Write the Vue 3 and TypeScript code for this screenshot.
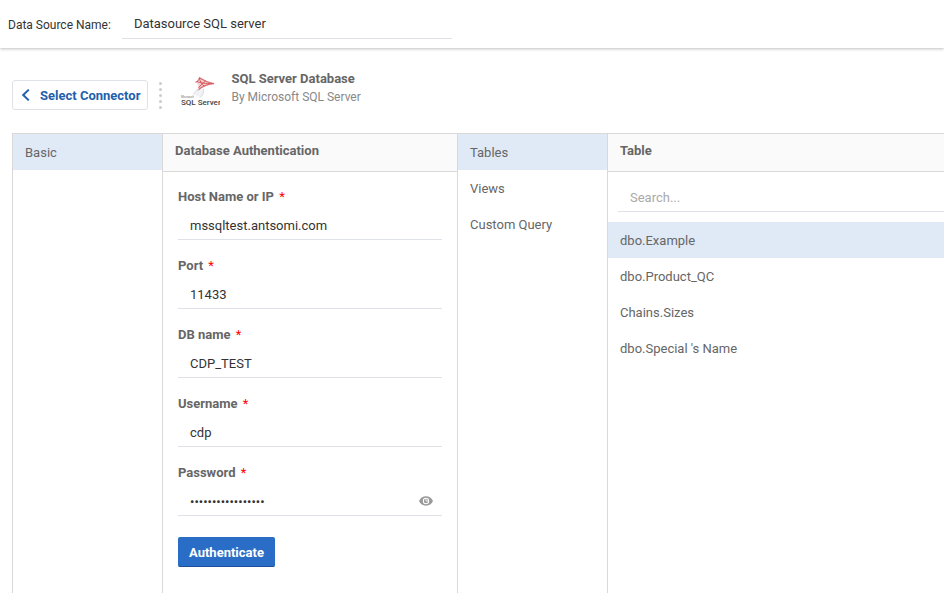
<script setup lang="ts">
import { ref } from 'vue'

interface Field {
  id: string
  label: string
  type: 'text' | 'password'
}

const fields: Field[] = [
  { id: 'host', label: 'Host Name or IP', type: 'text' },
  { id: 'port', label: 'Port', type: 'text' },
  { id: 'database', label: 'DB name', type: 'text' },
  { id: 'username', label: 'Username', type: 'text' },
  { id: 'password', label: 'Password', type: 'password' },
]

const values = ref<Record<string, string>>({
  host: 'mssqltest.antsomi.com',
  port: '11433',
  database: 'CDP_TEST',
  username: 'cdp',
  password: 'x'.repeat(17),
})

const sourceName = ref('Datasource SQL server')
const search = ref('')
const showPassword = ref(false)

const steps = ['Basic']
const step = ref('Basic')
const kinds = ['Tables', 'Views', 'Custom Query']
const kind = ref('Tables')
const tables = ['dbo.Example', 'dbo.Product_QC', 'Chains.Sizes', "dbo.Special 's Name"]
const table = ref('dbo.Example')

function inputType(field: Field): string {
  return field.type === 'password' && showPassword.value ? 'text' : field.type
}
</script>

<template>
  <div class="page">
    <header class="topbar">
      <label class="topbar-label" for="source-name">Data Source Name:</label>
      <input id="source-name" v-model="sourceName" class="line-input source-input" type="text" />
    </header>

    <div class="toolbar">
      <button class="back" type="button">
        <svg class="back-icon" viewBox="0 0 10 14" aria-hidden="true">
          <path d="M7.8 1.6 2.2 7l5.6 5.4" fill="none" stroke="currentColor" stroke-width="2" />
        </svg>
        <span>Select Connector</span>
      </button>
      <div class="dots" aria-hidden="true"><i v-for="n in 5" :key="n"></i></div>
      <div class="connector">
        <svg class="logo" viewBox="0 0 40 34" aria-hidden="true">
          <path d="M15 7c2.500-1.300 4-3 4-5 3 2.500 9 5 15 6.500-6 .5-11 2.500-16.500 7C19 12 19 9 15 7z" fill="#f3cfd0" />
          <path d="M19 2.500C24 5.500 28 7.500 34 8.700 28 9 22 11.500 17.500 15.500" fill="none" stroke="#d8686c" stroke-width="1.300" />
          <path d="M15.500 7c2 0 3.500-2 3.800-4 .5 3.500 3 6 4.500 8M17 6.500c3 1.500 9 2 15 2.200M18.500 13c2-3 4-4.500 7-7" fill="none" stroke="#d4595d" stroke-width="1" />
          <path d="M19.500 15c-4 1-6 3-5.300 4.500.8 1.200 4 1.300 5.800 3 3-1 4-5 3.500-9z" fill="#f0f2f5" />
          <path d="M19 14.500c-4 1.300-5.500 3.500-5 5M23.500 14c.5 3-.5 6-3.500 8.500" fill="none" stroke="#d5dae0" stroke-width="1" />
          <text class="logo-small" x="1" y="23">Microsoft</text>
          <text class="logo-text" x="1" y="30">SQL Server</text>
        </svg>
        <div class="connector-text">
          <h1>SQL Server Database</h1>
          <p>By Microsoft SQL Server</p>
        </div>
      </div>
    </div>

    <main class="panels">
      <nav class="panel">
        <button
          v-for="item in steps"
          :key="item"
          class="item"
          :class="{ active: item === step }"
          type="button"
          @click="step = item"
        >{{ item }}</button>
      </nav>

      <section class="panel">
        <h2 class="panel-title">Database Authentication</h2>
        <form class="form" @submit.prevent>
          <div v-for="field in fields" :key="field.id" class="field">
            <label :for="field.id">{{ field.label }} <span class="required">*</span></label>
            <div class="control">
              <input
                :id="field.id"
                v-model="values[field.id]"
                class="line-input"
                :type="inputType(field)"
              />
              <button
                v-if="field.type === 'password'"
                class="eye"
                type="button"
                aria-label="Show password"
                @click="showPassword = !showPassword"
              >
                <svg viewBox="0 0 14 10" aria-hidden="true">
                  <path d="M7 .3C3.900.3 1.300 2.200 0 5c1.300 2.800 3.900 4.700 7 4.700s5.700-1.900 7-4.700C12.700 2.200 10.100.3 7 .3z" fill="#999" />
                  <circle cx="7" cy="5" r="3.200" fill="#fff" />
                  <circle cx="7" cy="5" r="2.200" fill="#999" />
                  <path d="M7 3.200V5h2" fill="none" stroke="#fff" stroke-width=".9" />
                </svg>
              </button>
            </div>
          </div>
          <div class="actions">
            <button class="primary" type="submit">Authenticate</button>
          </div>
        </form>
      </section>

      <nav class="panel">
        <button
          v-for="item in kinds"
          :key="item"
          class="item"
          :class="{ active: item === kind }"
          type="button"
          @click="kind = item"
        >{{ item }}</button>
      </nav>

      <section class="panel last">
        <h2 class="panel-title">Table</h2>
        <div class="search">
          <input v-model="search" class="line-input" type="text" placeholder="Search..." aria-label="Search..." />
        </div>
        <button
          v-for="item in tables"
          :key="item"
          class="item"
          :class="{ active: item === table }"
          type="button"
          @click="table = item"
        >{{ item }}</button>
      </section>
    </main>
  </div>
</template>

<style>
body {
  background: #fff;
}
</style>

<style scoped>
* {
  box-sizing: border-box;
}

.page {
  display: flex;
  flex-direction: column;
  min-height: 100vh;
  color: #666;
  font: 13px/20px Roboto, 'Liberation Sans', sans-serif;
}

button,
input {
  font: inherit;
}

h1,
h2,
p {
  margin: 0;
  font-size: 13px;
}

.topbar {
  display: flex;
  align-items: center;
  gap: 11px;
  height: 48px;
  padding: 0 8px;
  box-shadow: 0 1px 3px rgba(0, 0, 0, 0.25);
}

.topbar-label {
  padding-top: 2px;
  color: #333;
  font-size: 12px;
}

.line-input {
  width: 100%;
  height: 29px;
  padding: 0 12px;
  border: 0;
  border-bottom: 1px solid #dee2e6;
  border-radius: 0;
  outline: 0;
  background: transparent;
  color: #333;
}

.line-input::placeholder {
  color: #aaa;
  opacity: 1;
}

.source-input {
  width: 330px;
}

.toolbar {
  display: flex;
  align-items: center;
  padding: 22px 12px 20px;
}

.back {
  display: flex;
  align-items: center;
  gap: 9px;
  height: 30px;
  margin-top: 7px;
  padding: 2px 7px 0 8px;
  border: 1px solid #dee2e6;
  border-radius: 3px;
  background: #fff;
  color: #1f5fac;
  font-weight: 700;
  white-space: nowrap;
}

.back-icon {
  width: 10px;
  height: 14px;
  margin-bottom: 2px;
}

.dots {
  display: flex;
  flex-direction: column;
  gap: 3px;
  margin: 7px 18px 0 11px;
}

.dots i {
  width: 3px;
  height: 3px;
  border-radius: 50%;
  background: #ccc;
}

.connector {
  display: flex;
  align-items: center;
  gap: 11px;
  height: 43px;
}

.logo {
  width: 40px;
  height: 34px;
}

.logo-small {
  fill: #777;
  font: 3px Roboto, sans-serif;
}

.logo-text {
  fill: #444;
  font: 500 8px Roboto, sans-serif;
}

.connector-text {
  align-self: flex-start;
  line-height: 18px;
}

.connector-text p {
  color: #888;
  font-size: 12px;
}

.panels {
  display: grid;
  flex: 1;
  grid-template-columns: 150px 295px 150px minmax(0, 1fr);
  margin-left: 12px;
  border-top: 1px solid #d9d9d9;
  border-left: 1px solid #d9d9d9;
}

.panel {
  border-right: 1px solid #d9d9d9;
}

.panel.last {
  border-right: 0;
}

.panel-title {
  padding: 7px 12px 10px;
  border-bottom: 1px solid #d9d9d9;
  background: #fafafa;
  font-weight: 700;
}

.item {
  display: block;
  width: 100%;
  height: 36px;
  padding: 2px 12px 0;
  border: 0;
  background: transparent;
  color: #666;
  text-align: left;
}

.item.active {
  background: #e0eaf6;
}

.form {
  display: flex;
  flex-direction: column;
  gap: 16px;
  padding: 15px;
}

.field {
  display: flex;
  flex-direction: column;
  gap: 4px;
}

.field label {
  font-weight: 700;
}

.required {
  margin-left: 2px;
  color: #f00;
  font-weight: 400;
}

.control {
  position: relative;
  display: flex;
}

.eye {
  position: absolute;
  top: 9px;
  right: 9px;
  width: 14px;
  height: 10px;
  padding: 0;
  border: 0;
  background: none;
}

.eye svg {
  display: block;
  width: 14px;
  height: 10px;
}

.actions {
  padding-top: 5px;
}

.primary {
  height: 30px;
  padding: 2px 11px 0;
  border: 0;
  border-bottom: 1px solid #1f4f9a;
  border-radius: 2px;
  background: #2a6dc6;
  color: #fff;
  font-weight: 700;
}

.search {
  padding: 11px 0 10px 10px;
}
</style>
